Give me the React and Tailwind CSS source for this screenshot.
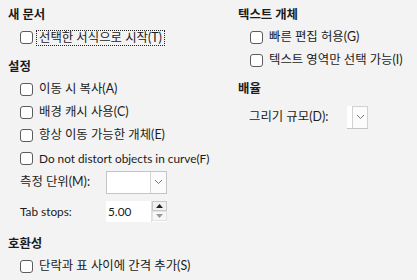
import React from 'react';

const font = { fontFamily: 'Lato, "Noto Sans CJK KR", sans-serif' };

const Check = ({ label, focused, small }) => (
    <div className="flex items-center h-[23px] pl-[12px]">
        <span className="w-[13px] h-[13px] rounded-[3px] border border-[#5c5c5c] bg-white shrink-0" />
        {focused ? (
            <span className="ml-[3px] px-[2px] border border-dotted border-[#222] leading-[14px]">{label}</span>
        ) : (
            <span className={`ml-[6px] ${small ? 'text-[11.8px]' : ''}`}>{label}</span>
        )}
    </div>
);

const Chevron = () => (
    <svg width="9" height="6" viewBox="0 0 9 6" fill="none">
        <path d="M1 1l3.5 3.5L8 1" stroke="#777" strokeWidth="1" />
    </svg>
);

const Heading = ({ children, className = '' }) => (
    <div className={`h-[20px] flex items-center font-bold ${className}`}>{children}</div>
);

export default function App() {
    return (
        <div className="w-[417px] h-[280px] bg-[#f3f3f3] text-[#1b1b1b] text-[12.4px] flex overflow-hidden" style={font}>
            {/* left column */}
            <div className="w-[230px] pl-[8px] pt-[5px] flex flex-col">
                <Heading>새 문서</Heading>
                <div className="mt-[1px]">
                    <Check label="선택한 서식으로 시작(T)" focused />
                </div>

                <Heading className="mt-[8px]">설정</Heading>
                <div className="mt-[1px]">
                    <Check label="이동 시 복사(A)" />
                    <Check label="배경 캐시 사용(C)" />
                    <Check label="항상 이동 가능한 개체(E)" />
                    <Check label="Do not distort objects in curve(F)" small />
                </div>

                <div className="flex items-center h-[24px] pl-[12px]">
                    <span className="w-[86px]">측정 단위(M):</span>
                    <div className="w-[61px] h-[23px] flex bg-white border border-[#c4c4c4]">
                        <div className="flex-1" />
                        <div className="w-[16px] border-l border-[#d4d4d4] bg-[#fbfbfb] flex items-center justify-center">
                            <Chevron />
                        </div>
                    </div>
                </div>

                <div className="flex items-center h-[21px] pl-[12px] mt-[7px]">
                    <span className="w-[86px] text-[11.8px]">Tab stops:</span>
                    <div className="w-[61px] h-[21px] flex bg-white">
                        <div className="flex-1 flex items-center pl-[2px] text-[11.8px]">5.00</div>
                        <div className="w-[16px] flex flex-col border-l border-[#e0e0e0]">
                            <div className="h-[10px] bg-[#f1f1f1] border border-[#c8c8c8] flex items-center justify-center">
                                <svg width="7" height="4" viewBox="0 0 7 4"><path d="M0 4L3.5 0L7 4Z" fill="#222" /></svg>
                            </div>
                            <div className="h-[10px] bg-[#f7f7f7] border border-[#e2e2e2] flex items-center justify-center">
                                <svg width="7" height="4" viewBox="0 0 7 4"><path d="M0 0L3.5 4L7 0Z" fill="#999" /></svg>
                            </div>
                        </div>
                    </div>
                </div>

                <Heading className="mt-[12px]">호환성</Heading>
                <div className="mt-[1px]">
                    <Check label="단락과 표 사이에 간격 추가(S)" />
                </div>
            </div>

            {/* right column */}
            <div className="flex-1 pl-[8px] pt-[5px] flex flex-col">
                <Heading>텍스트 개체</Heading>
                <div className="mt-[1px]">
                    <Check label="빠른 편집 허용(G)" />
                    <Check label="텍스트 영역만 선택 가능(I)" />
                </div>

                <Heading className="mt-[7px]">배율</Heading>
                <div className="flex items-center h-[24px] pl-[11px] mt-[6px]">
                    <span className="w-[98px]">그리기 규모(D):</span>
                    <div className="w-[21px] h-[23px] flex bg-white border-b border-[#c4c4c4]">
                        <div className="w-[5px]" />
                        <div className="flex-1 border border-b-0 border-[#d0d0d0] bg-[#fbfbfb] flex items-center justify-center">
                            <Chevron />
                        </div>
                    </div>
                </div>
            </div>
        </div>
    );
}
